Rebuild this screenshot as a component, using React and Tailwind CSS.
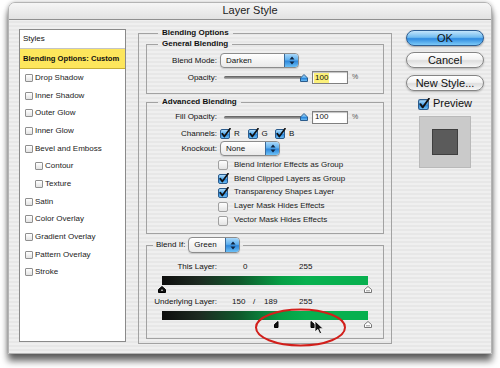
import React from 'react';

// small aqua checkbox
function Box({ on, size = 11 }) {
  return (
    <svg width={size} height={size} viewBox="0 0 11 11" className="shrink-0">
      <rect x="0.5" y="1.5" width="9" height="9" rx="1.5" fill={on ? 'url(#aqua)' : 'url(#plain)'} stroke={on ? '#2c5c8c' : '#a0a0a0'} />
      {on && <path d="M2.2 5.6 L4.3 8.6 L10 0.7" fill="none" stroke="#111" strokeWidth="1.7" strokeLinecap="round" strokeLinejoin="round" />}
    </svg>
  );
}

function Select({ value, w }) {
  return (
    <div className={`flex h-[15px] ${w} shrink-0 items-center rounded-[4px] border border-[#8c8c8c] bg-gradient-to-b from-white to-[#e9e9e9] shadow-[0_1px_1px_rgba(0,0,0,0.15)]`}>
      <span className="flex-1 pl-[5px] text-[8px] leading-none text-[#111]">{value}</span>
      <span className="flex h-full w-[14px] items-center justify-center rounded-r-[3px] bg-[linear-gradient(#a9d8fa_0%,#5fb0ee_45%,#2f88dc_55%,#6cc0f6_100%)] border-l border-[#3a6a9a]">
        <svg width="6" height="9" viewBox="0 0 6 9">
          <path d="M3 0.5 L5.5 3.5 L0.5 3.5 Z" fill="#0f2440" />
          <path d="M3 8.5 L5.5 5.5 L0.5 5.5 Z" fill="#0f2440" />
        </svg>
      </span>
    </div>
  );
}

function Slider() {
  return (
    <div className="ml-[7px] flex w-[84px] shrink-0 items-center">
      <div className="h-[3px] flex-1 rounded-full bg-gradient-to-b from-[#5a5a5a] to-[#b8b8b8]" />
      <svg width="8" height="8" viewBox="0 0 8 8" className="-ml-[2px] shrink-0">
        <path d="M4 0.5 L7.5 4 L7.5 7.5 L0.5 7.5 L0.5 4 Z" fill="url(#aqua)" stroke="#2c5c8c" />
      </svg>
    </div>
  );
}

function NumField({ hl }) {
  return (
    <>
      <div className="ml-[4px] flex h-[13px] w-[36px] shrink-0 items-center border border-[#7f7f7f] bg-white pl-[1px] shadow-[inset_0_1px_1px_rgba(0,0,0,0.25)]">
        <span className={`px-[1px] text-[8px] leading-[10px] text-[#111] ${hl ? 'bg-[#fbf07a]' : ''}`}>100</span>
      </div>
      <span className="ml-[4px] text-[7px] text-[#555]">%</span>
    </>
  );
}

function Thumb({ kind }) {
  if (kind === 'black')
    return (
      <svg width="8" height="7" viewBox="0 0 8 7"><path d="M4 0.5 L7.5 3.5 L7.5 6.5 L0.5 6.5 L0.5 3.5 Z" fill="#111" stroke="#000" /><rect x="3.3" y="3.6" width="1.4" height="1.4" fill="#ddd" /></svg>
    );
  if (kind === 'white')
    return (
      <svg width="8" height="7" viewBox="0 0 8 7"><path d="M4 0.5 L7.5 3.5 L7.5 6.5 L0.5 6.5 L0.5 3.5 Z" fill="#fff" stroke="#777" /><line x1="2" y1="4.8" x2="6" y2="4.8" stroke="#999" /></svg>
    );
  if (kind === 'left')
    return (
      <svg width="8" height="7" viewBox="0 0 8 7"><path d="M4 0.5 L4 6.5 L0.5 6.5 L0.5 3.5 Z" fill="#111" stroke="#000" /></svg>
    );
  return (
    <svg width="8" height="7" viewBox="0 0 8 7"><path d="M4 0.5 L7.5 3.5 L7.5 6.5 L4 6.5 Z" fill="#111" stroke="#000" /></svg>
  );
}

const styleItems = [
  ['Drop Shadow', 0], ['Inner Shadow', 0], ['Outer Glow', 0], ['Inner Glow', 0],
  ['Bevel and Emboss', 0], ['Contour', 1], ['Texture', 1], ['Satin', 0],
  ['Color Overlay', 0], ['Gradient Overlay', 0], ['Pattern Overlay', 0], ['Stroke', 0],
];

const options = [
  ['Blend Interior Effects as Group', false],
  ['Blend Clipped Layers as Group', true],
  ['Transparency Shapes Layer', true],
  ['Layer Mask Hides Effects', false],
  ['Vector Mask Hides Effects', false],
];

const bar = 'h-[9px] w-[206px] ml-[15px] bg-[linear-gradient(to_right,#0d0d0d_0%,#1d2a21_18%,#0f5a2c_38%,#06a046_58%,#07b04f_70%,#07b04f_100%)]';

export default function App() {
  return (
    <div className="relative h-[368px] w-[500px] overflow-hidden bg-white px-[8px] pt-[2px] font-['Liberation_Sans',Arial,sans-serif] text-[#111]">
      <svg width="0" height="0" className="absolute">
        <defs>
          <linearGradient id="aqua" x1="0" y1="0" x2="0" y2="1">
            <stop offset="0" stopColor="#b9e0fb" />
            <stop offset="0.45" stopColor="#5aaeee" />
            <stop offset="0.55" stopColor="#2a85da" />
            <stop offset="1" stopColor="#78c6f7" />
          </linearGradient>
          <linearGradient id="plain" x1="0" y1="0" x2="0" y2="1">
            <stop offset="0" stopColor="#ffffff" />
            <stop offset="1" stopColor="#e2e2e2" />
          </linearGradient>
        </defs>
      </svg>

      {/* dialog window */}
      <div className="h-[352px] w-[484px] overflow-hidden rounded-t-[7px] border border-[#b4b4b4] bg-[repeating-linear-gradient(180deg,#efefef_0px,#efefef_2px,#e7e7e7_2px,#e7e7e7_4px)] shadow-[0_7px_7px_rgba(0,0,0,0.6),0_0_4px_rgba(0,0,0,0.25)]">
        <div className="flex h-[17px] items-center justify-center border-b border-[#8f8f8f] bg-gradient-to-b from-[#f6f6f6] to-[#e2e2e2] pb-[1px] text-[11px] text-[#222]">
          Layer Style
        </div>

        <div className="flex items-start pl-[10px] pt-[9px]">
          {/* styles list */}
          <div className="h-[313px] w-[107px] shrink-0 border border-[#8a8a8a] bg-white text-[8px]">
            <div className="flex h-[19px] items-center border-b border-[#c4c4c4] pl-[3px]">Styles</div>
            <div className="flex h-[20px] items-center border-b border-[#c7ae35] bg-[#fde65c] pl-[3px] text-[7.6px] font-bold">Blending Options: Custom</div>
            {styleItems.map(([name, indent]) => (
              <div key={name} className={`flex h-[17.7px] items-center gap-[2px] ${indent ? 'pl-[15px]' : 'pl-[5px]'}`}>
                <span className="h-[8px] w-[8px] rounded-[1px] border border-[#8f8f8f] bg-gradient-to-b from-white to-[#e3e3e3]" />
                <span className="text-[#222]">{name}</span>
              </div>
            ))}
          </div>

          {/* blending options */}
          <fieldset className="-mt-[1px] ml-[12px] h-[316px] w-[252px] shrink-0 border border-[#a2a2a2] px-[7px] text-[8px]">
            <legend className="ml-[12px] px-[4px] font-bold leading-[10px]">Blending Options</legend>

            <fieldset className="mt-[1px] h-[55px] w-[238px] border border-[#a2a2a2]">
              <legend className="ml-[11px] px-[4px] font-bold leading-[10px]">General Blending</legend>
              <div className="mt-[4px] flex h-[15px] items-center">
                <span className="w-[70px] text-right">Blend Mode:</span>
                <div className="ml-[3px]"><Select value="Darken" w="w-[79px]" /></div>
              </div>
              <div className="mt-[2px] flex h-[15px] items-center">
                <span className="w-[70px] text-right">Opacity:</span>
                <Slider />
                <NumField hl />
              </div>
            </fieldset>

            <fieldset className="mt-[3px] h-[137px] w-[238px] border border-[#a2a2a2]">
              <legend className="ml-[11px] px-[4px] font-bold leading-[10px]">Advanced Blending</legend>
              <div className="mt-[3px] flex h-[14px] items-center">
                <span className="w-[70px] text-right">Fill Opacity:</span>
                <Slider />
                <NumField />
              </div>
              <div className="mt-[3px] flex h-[13px] items-center">
                <span className="w-[70px] text-right">Channels:</span>
                <div className="ml-[3px] flex">
                  {['R', 'G', 'B'].map((c) => (
                    <span key={c} className="flex w-[27.5px] items-center gap-[3px]">
                      <Box on />
                      <span>{c}</span>
                    </span>
                  ))}
                </div>
              </div>
              <div className="mt-[1px] flex h-[15px] items-center">
                <span className="w-[70px] text-right">Knockout:</span>
                <div className="ml-[3px]"><Select value="None" w="w-[60px]" /></div>
              </div>
              <div className="mt-[2px] flex flex-col">
                {options.map(([label, on]) => (
                  <div key={label} className="flex h-[13.8px] items-center gap-[5px] pl-[71px]">
                    <Box on={on} />
                    <span className="text-[#222]">{label}</span>
                  </div>
                ))}
              </div>
            </fieldset>

            <fieldset className="mt-[3px] h-[102px] w-[238px] border border-[#a2a2a2]">
              <legend className="ml-[6px] flex items-center gap-[3px] px-[3px]">
                <span>Blend If:</span>
                <div className="[&>div]:h-[16px]"><Select value="Green" w="w-[52px]" /></div>
              </legend>
              <div className="mt-[9px] flex h-[10px] items-center">
                <span className="w-[70px] shrink-0 text-right">This Layer:</span>
                <span className="ml-[26px] w-[56px] shrink-0">0</span>
                <span>255</span>
              </div>
              <div className={`mt-[4px] ${bar}`} />
              <div className="ml-[11px] flex h-[8px] w-[214px] items-start justify-between pt-[1px]">
                <Thumb kind="black" />
                <Thumb kind="white" />
              </div>
              <div className="mt-[4px] flex h-[10px] items-center">
                <span className="w-[70px] shrink-0 text-right">Underlying Layer:</span>
                <span className="ml-[15px] w-[21px] shrink-0">150</span>
                <span className="w-[11px] shrink-0">/</span>
                <span className="w-[35px] shrink-0">189</span>
                <span>255</span>
              </div>
              <div className={`mt-[4px] ${bar}`} />
              <div className="ml-[11px] flex h-[8px] w-[214px] items-start pt-[1px]">
                <span className="ml-[116px]"><Thumb kind="left" /></span>
                <span className="ml-[25px]"><Thumb kind="right" /></span>
                <span className="ml-auto"><Thumb kind="white" /></span>
              </div>
            </fieldset>
          </fieldset>

          {/* buttons */}
          <div className="ml-[14px] flex w-[78px] shrink-0 flex-col items-center text-[11px]">
            <button className="mt-[1px] h-[16px] w-full rounded-full border border-[#2d5d92] bg-[linear-gradient(#c3e5fc_0%,#72bcf0_45%,#2f8be0_55%,#7ccaf8_100%)] leading-none shadow-[0_1px_2px_rgba(0,0,0,0.3)]">OK</button>
            <button className="mt-[6px] h-[16px] w-full rounded-full border border-[#858585] bg-[linear-gradient(#ffffff_0%,#f3f3f3_45%,#dedede_55%,#f8f8f8_100%)] leading-none shadow-[0_1px_2px_rgba(0,0,0,0.25)]">Cancel</button>
            <button className="mt-[7px] h-[16px] w-full rounded-full border border-[#858585] bg-[linear-gradient(#ffffff_0%,#f3f3f3_45%,#dedede_55%,#f8f8f8_100%)] leading-none shadow-[0_1px_2px_rgba(0,0,0,0.25)]">New Style...</button>
            <div className="mt-[6px] flex h-[13px] items-center gap-[3px]">
              <Box on size={12} />
              <span>Preview</span>
            </div>
            <div className="mt-[6px] flex h-[52px] w-[52px] items-center justify-center border border-[#b9b9b9] bg-[#cacaca]">
              <div className="h-[26px] w-[26px] border border-[#3f3f3f] bg-[#5b5b5b]" />
            </div>
          </div>
        </div>
      </div>

      {/* annotation: red ellipse and mouse pointer */}
      <svg className="absolute left-[254px] top-[307px]" width="93" height="41" viewBox="0 0 93 41">
        <ellipse cx="46.5" cy="20.5" rx="44.5" ry="18" fill="none" stroke="#d21f1b" strokeWidth="2" />
      </svg>
      <svg className="absolute left-[314px] top-[320px]" width="10" height="15" viewBox="0 0 10 15">
        <path d="M1 1 L1 12 L3.8 9.4 L5.8 13.8 L7.6 13 L5.7 8.7 L9.3 8.7 Z" fill="#111" stroke="#fff" strokeWidth="0.8" strokeLinejoin="round" />
      </svg>
    </div>
  );
}
